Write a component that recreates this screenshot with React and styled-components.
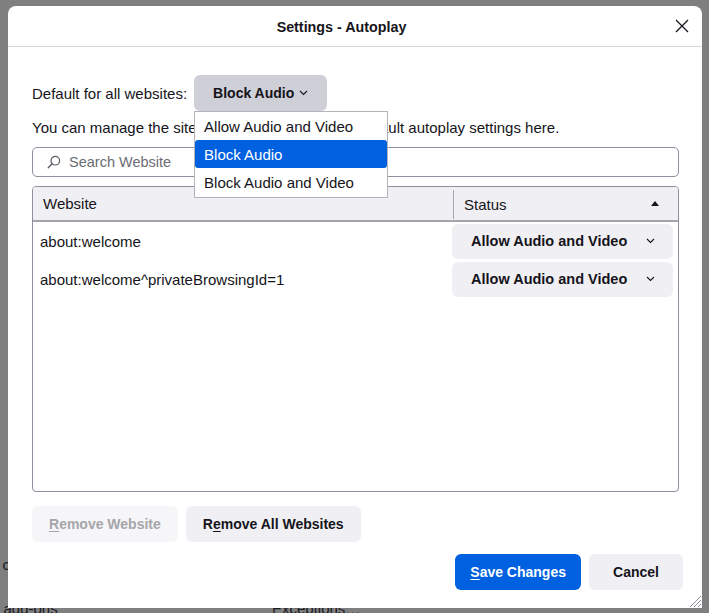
import React from "react";
import styled, { createGlobalStyle } from "styled-components";

const GlobalStyle = createGlobalStyle`
  html, body {
    margin: 0;
    padding: 0;
  }
  body {
    font-family: "Liberation Sans", Arial, sans-serif;
    color: #15141a;
  }
`;

const sites = [
  { host: "about:welcome", status: "Allow Audio and Video" },
  { host: "about:welcome^privateBrowsingId=1", status: "Allow Audio and Video" },
];

const defaultOptions = ["Allow Audio and Video", "Block Audio", "Block Audio and Video"];

function Chevron() {
  return (
    <svg width="9" height="6" viewBox="0 0 9 6">
      <polyline points="1,1 4.5,4.5 8,1" fill="none" stroke="#15141a" strokeWidth="1.1" />
    </svg>
  );
}

function SearchIcon() {
  return (
    <svg width="14" height="14" viewBox="0 0 14 14">
      <circle cx="8.3" cy="5.7" r="4.3" fill="none" stroke="#5b5b66" strokeWidth="1.2" />
      <line x1="5.2" y1="8.8" x2="1.2" y2="12.8" stroke="#5b5b66" strokeWidth="1.3" strokeLinecap="round" />
    </svg>
  );
}

function CloseIcon() {
  return (
    <svg width="14" height="14" viewBox="0 0 14 14">
      <path d="M1 1 L13 13 M13 1 L1 13" stroke="#15141a" strokeWidth="1.3" fill="none" />
    </svg>
  );
}

function ResizeGrip() {
  return (
    <svg width="14" height="14" viewBox="0 0 14 14">
      <path d="M13 2 L2 13 M13 6 L6 13 M13 10 L10 13" stroke="#8f8f9d" strokeWidth="1" fill="none" />
    </svg>
  );
}

function App() {
  return (
    <>
      <GlobalStyle />
      <Page>
        <BackText style={{ left: -36, top: 84 }}>Allow</BackText>
        <BackText style={{ left: -60, top: 556 }}>Autoplay c</BackText>
        <BackText style={{ left: -4, top: 600 }}>l add-ons</BackText>
        <BackText style={{ left: 272, top: 600 }}>Exceptions…</BackText>

        <Dialog>
          <Header>
            <Title>Settings - Autoplay</Title>
            <CloseButton>
              <CloseIcon />
            </CloseButton>
          </Header>

          <Body>
            <DefaultRow>
              <Label>Default for all websites:</Label>
              <MenuAnchor>
                <DropButton $pressed>
                  Block Audio
                  <Chevron />
                </DropButton>
                <Menu>
                  {defaultOptions.map((opt) => (
                    <MenuItem key={opt} $active={opt === "Block Audio"}>
                      {opt}
                    </MenuItem>
                  ))}
                </Menu>
              </MenuAnchor>
            </DefaultRow>

            <Description>
              You can manage the sites that do not follow your default autoplay settings here.
            </Description>

            <SearchBox>
              <SearchIcon />
              <SearchPlaceholder>Search Website</SearchPlaceholder>
            </SearchBox>

            <Table>
              <HeadRow>
                <HeadCell>Website</HeadCell>
                <HeadCell $status>
                  Status
                  <SortArrow />
                </HeadCell>
              </HeadRow>
              {sites.map((s) => (
                <SiteRow key={s.host}>
                  <HostCell>{s.host}</HostCell>
                  <StatusSelect>
                    {s.status}
                    <Chevron />
                  </StatusSelect>
                </SiteRow>
              ))}
            </Table>

            <ActionRow>
              <Button disabled>
                <u>R</u>emove Website
              </Button>
              <Button>
                R<u>e</u>move All Websites
              </Button>
            </ActionRow>
          </Body>

          <Footer>
            <Button $primary $pad={15}>
              <u>S</u>ave Changes
            </Button>
            <Button $minWidth={94}>Cancel</Button>
          </Footer>

          <Grip>
            <ResizeGrip />
          </Grip>
        </Dialog>
      </Page>
    </>
  );
}

export default App;

const Page = styled.div`
  position: relative;
  width: 709px;
  height: 613px;
  overflow: hidden;
  background: #7f7f7f;
`;

const BackText = styled.span`
  position: absolute;
  font-size: 15px;
  line-height: 18px;
  color: #1b1b1f;
  white-space: nowrap;
`;

const Dialog = styled.div`
  position: absolute;
  left: 8px;
  top: 6px;
  width: 694px;
  height: 602px;
  background: #fff;
  border-radius: 8px 8px 0 0;
  display: flex;
  flex-direction: column;
  box-sizing: border-box;
`;

const Header = styled.div`
  position: relative;
  height: 40px;
  flex-shrink: 0;
  display: flex;
  align-items: center;
  justify-content: center;
  padding-right: 27px;
  border-bottom: 1px solid #d7d7db;
`;

const Title = styled.div`
  font-size: 14.3px;
  font-weight: 700;
  padding-top: 1px;
`;

const CloseButton = styled.div`
  position: absolute;
  right: 13px;
  top: 13px;
  width: 14px;
  height: 14px;
  display: flex;
`;

const Body = styled.div`
  flex: 1;
  display: flex;
  flex-direction: column;
  padding: 28px 23px 0 24px;
`;

const DefaultRow = styled.div`
  display: flex;
  align-items: center;
  gap: 7px;
  font-size: 15px;
`;

const Label = styled.span`
  font-size: 15px;
`;

const MenuAnchor = styled.div`
  position: relative;
`;

const DropButton = styled.div`
  height: 36px;
  box-sizing: border-box;
  padding: 0 19px;
  display: flex;
  align-items: center;
  gap: 5px;
  white-space: nowrap;
  border-radius: 6px;
  background: ${(p) => (p.$pressed ? "#cfcfd8" : "#f0f0f4")};
  font-size: 14px;
  font-weight: 700;
`;

const Menu = styled.div`
  position: absolute;
  left: 0;
  top: 36px;
  width: 194px;
  box-sizing: border-box;
  border: 1px solid #b3b3b8;
  background: #fff;
  padding: 0 0 1px;
  z-index: 2;
`;

const MenuItem = styled.div`
  height: 28px;
  display: flex;
  align-items: center;
  padding-left: 9px;
  font-size: 15px;
  white-space: nowrap;
  border-radius: 3px;
  background: ${(p) => (p.$active ? "#0061e0" : "transparent")};
  color: ${(p) => (p.$active ? "#fff" : "#15141a")};
`;

const Description = styled.p`
  margin: 8px 0 0;
  font-size: 15px;
  line-height: 18px;
`;

const SearchBox = styled.div`
  margin-top: 10px;
  height: 30px;
  box-sizing: border-box;
  border: 1px solid #8f8f9d;
  border-radius: 5px;
  display: flex;
  align-items: center;
  gap: 8px;
  padding-left: 14px;
`;

const SearchPlaceholder = styled.span`
  font-size: 14.5px;
  color: #6b6b73;
`;

const Table = styled.div`
  margin-top: 9px;
  height: 306px;
  box-sizing: border-box;
  border: 1px solid #8f8f9d;
  border-radius: 4px;
  overflow: hidden;
  display: flex;
  flex-direction: column;
`;

const HeadRow = styled.div`
  height: 35px;
  flex-shrink: 0;
  box-sizing: border-box;
  display: grid;
  grid-template-columns: 420px 1fr;
  background: #f0f0f4;
  border-bottom: 2px solid #a4a4ad;
  padding-bottom: 1px;
`;

const HeadCell = styled.div`
  display: flex;
  align-items: center;
  justify-content: space-between;
  font-size: 15px;
  padding: 0 ${(p) => (p.$status ? "19px" : "10px")} 0 10px;
  margin: ${(p) => (p.$status ? "3px 0 0" : "0")};
  border-left: ${(p) => (p.$status ? "1px solid #a4a4ad" : "none")};
`;

const SortArrow = styled.span`
  width: 0;
  height: 0;
  border-left: 4px solid transparent;
  border-right: 4px solid transparent;
  border-bottom: 5px solid #15141a;
  margin-top: -2px;
`;

const SiteRow = styled.div`
  height: 38px;
  flex-shrink: 0;
  display: grid;
  grid-template-columns: 419px 221px;
  align-items: center;
`;

const HostCell = styled.div`
  font-size: 15px;
  padding-left: 7px;
`;

const StatusSelect = styled.div`
  height: 35px;
  box-sizing: border-box;
  display: flex;
  align-items: center;
  justify-content: space-between;
  padding: 0 18px 0 19px;
  border-radius: 6px;
  background: #f0f0f4;
  font-size: 14.5px;
  font-weight: 700;
`;

const ActionRow = styled.div`
  display: flex;
  gap: 8px;
  margin-top: 14px;
`;

const Button = styled.button`
  height: 36px;
  box-sizing: border-box;
  border: none;
  border-radius: 6px;
  padding: 0 ${(p) => p.$pad ?? 17}px;
  min-width: ${(p) => p.$minWidth ?? 0}px;
  font-family: inherit;
  font-size: 14px;
  font-weight: 700;
  white-space: nowrap;
  background: ${(p) => (p.$primary ? "#0061e0" : "#f0f0f4")};
  color: ${(p) => (p.$primary ? "#fff" : "#15141a")};
  &:disabled {
    background: #f6f6f8;
    color: #a5a5ab;
  }
  u {
    text-underline-offset: 2px;
  }
`;

const Footer = styled.div`
  display: flex;
  justify-content: flex-end;
  gap: 8px;
  padding: 0 19px 18px 0;
`;

const Grip = styled.div`
  position: absolute;
  right: 0;
  bottom: 0;
  width: 14px;
  height: 14px;
  display: flex;
`;
